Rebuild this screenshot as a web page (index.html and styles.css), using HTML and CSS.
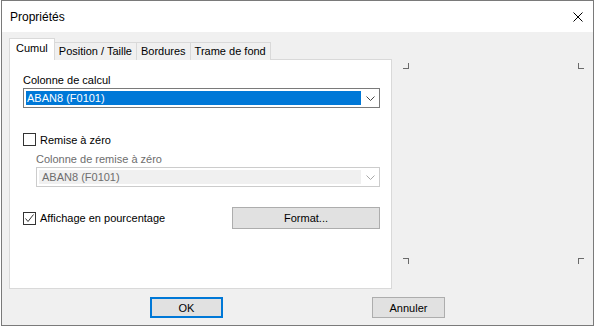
FILE: index.html
```html
<!DOCTYPE html>
<html lang="fr">
<head>
    <meta charset="UTF-8">
    <meta name="viewport" content="width=device-width, initial-scale=1.0">
    <title>Propriétés</title>
    <link rel="stylesheet" href="styles.css">
</head>
<body>

    <div class="dialog">
        <div class="titlebar">
            <span class="title">Propriétés</span>
            <svg class="close" width="10" height="10" viewBox="0 0 10 10">
                <path d="M0.5 0.5 L9.5 9.5 M9.5 0.5 L0.5 9.5" stroke="#000" stroke-width="1" fill="none"/>
            </svg>
        </div>

        <div class="client">
            <div class="content">
                <div class="tabcontrol">
                    <div class="tabs">
                        <div class="tab selected">Cumul</div>
                        <div class="tab">Position / Taille</div>
                        <div class="tab">Bordures</div>
                        <div class="tab">Trame de fond</div>
                    </div>
                    <div class="panel">
                        <div class="label">Colonne de calcul</div>
                        <div class="combo">
                            <span class="combo-value selected-value">ABAN8 (F0101)</span>
                            <span class="combo-arrow">
                                <svg width="9" height="5" viewBox="0 0 9 5"><path d="M0.5 0.5 L4.5 4.5 L8.5 0.5" stroke="#444" fill="none"/></svg>
                            </span>
                        </div>

                        <label class="check-row reset-row">
                            <span class="checkbox"></span>
                            <span>Remise à zéro</span>
                        </label>
                        <div class="indent">
                            <div class="label disabled-text">Colonne de remise à zéro</div>
                            <div class="combo disabled">
                                <span class="combo-value">ABAN8 (F0101)</span>
                                <span class="combo-arrow">
                                    <svg width="9" height="5" viewBox="0 0 9 5"><path d="M0.5 0.5 L4.5 4.5 L8.5 0.5" stroke="#a8a8a8" fill="none"/></svg>
                                </span>
                            </div>
                        </div>

                        <div class="percent-row">
                            <label class="check-row">
                                <span class="checkbox">
                                    <svg width="11" height="11" viewBox="0 0 11 11"><path d="M1.5 5.5 L4 8.5 L9.5 1.5" stroke="#333" fill="none"/></svg>
                                </span>
                                <span>Affichage en pourcentage</span>
                            </label>
                            <button class="btn format-btn">Format...</button>
                        </div>
                    </div>
                </div>

                <div class="preview">
                    <div class="marks">
                        <span class="mark tl"></span>
                        <span class="mark tr"></span>
                    </div>
                    <div class="marks">
                        <span class="mark bl"></span>
                        <span class="mark br"></span>
                    </div>
                </div>
            </div>

            <div class="buttons">
                <button class="btn default">OK</button>
                <button class="btn">Annuler</button>
            </div>
        </div>
    </div>

</body>
</html>
```

FILE: styles.css
```css
body {
    margin: 0;
    padding: 0;
    background-color: #ffffff;
    font-family: "Liberation Sans", Arial, sans-serif;
    font-size: 11px;
    color: #000;
}

.dialog {
    width: 593px;
    height: 326px;
    margin: 0 1px;
    box-sizing: border-box;
    border: 1px solid #7a7a7a;
    display: flex;
    flex-direction: column;
}

.titlebar {
    flex-shrink: 0;
    height: 31px;
    background-color: #ffffff;
    display: flex;
    align-items: center;
    justify-content: space-between;
    padding: 0 10px 0 8px;
}

.title {
    font-size: 12px;
}

.client {
    flex: 1;
    background-color: #f0f0f0;
    padding: 6px 0 0 7px;
}

.content {
    display: flex;
}

.tabcontrol {
    width: 383px;
}

.tabs {
    display: flex;
    align-items: flex-end;
    margin-bottom: -1px;
}

.tab {
    height: 17px;
    line-height: 17px;
    padding: 0 4px;
    border: 1px solid #d9d9d9;
    border-bottom: none;
    margin-left: -1px;
    background-color: #f0f0f0;
}

.tab.selected {
    height: 21px;
    line-height: 19px;
    margin-left: 0;
    padding: 0 6px;
    background-color: #ffffff;
    position: relative;
    z-index: 1;
}

.panel {
    height: 230px;
    box-sizing: border-box;
    background-color: #ffffff;
    border: 1px solid #d9d9d9;
    padding: 14px 11px 0 13px;
}

.label {
    line-height: 13px;
    height: 13px;
    margin-bottom: 1px;
}

.combo {
    height: 20px;
    box-sizing: border-box;
    border: 1px solid #7a7a7a;
    background-color: #ffffff;
    display: flex;
    align-items: stretch;
    padding: 2px 0 2px 2px;
}

.combo-value {
    flex: 1;
    line-height: 14px;
    padding-left: 1px;
}

.selected-value {
    background-color: #0078d7;
    color: #ffffff;
}

.combo-arrow {
    width: 18px;
    display: flex;
    align-items: center;
    justify-content: center;
}

.combo.disabled {
    border-color: #cccccc;
}

.combo.disabled .combo-value {
    background-color: #f0f0f0;
    color: #6d6d6d;
    padding-left: 3px;
}

.disabled-text {
    color: #6d6d6d;
}

.check-row {
    display: flex;
    align-items: center;
    gap: 4px;
    height: 13px;
}

.checkbox {
    width: 13px;
    height: 13px;
    box-sizing: border-box;
    border: 1px solid #333333;
    background-color: #ffffff;
    display: flex;
    align-items: center;
    justify-content: center;
}

.reset-row {
    margin-top: 25px;
}

.indent {
    margin-left: 13px;
    margin-top: 7px;
}

.percent-row {
    margin-top: 20px;
    display: flex;
    align-items: center;
    justify-content: space-between;
    height: 22px;
}

.btn {
    font-family: "Liberation Sans", Arial, sans-serif;
    font-size: 11px;
    color: #000;
    background-color: #e1e1e1;
    border: 1px solid #adadad;
    padding: 0;
    box-sizing: border-box;
}

.format-btn {
    width: 148px;
    height: 22px;
}

.preview {
    flex: 1;
    display: flex;
    flex-direction: column;
    justify-content: space-between;
    padding: 25px 9px 25px 11px;
}

.marks {
    display: flex;
    justify-content: space-between;
}

.mark {
    width: 5px;
    height: 5px;
    border: 0 solid #6a6a6a;
}

.mark.tl { border-right-width: 1px; border-bottom-width: 1px; }
.mark.tr { border-left-width: 1px; border-bottom-width: 1px; }
.mark.bl { border-right-width: 1px; border-top-width: 1px; }
.mark.br { border-left-width: 1px; border-top-width: 1px; }

.buttons {
    display: flex;
    gap: 149px;
    padding-left: 141px;
    margin-top: 8px;
}

.buttons .btn {
    width: 73px;
    height: 21px;
}

.btn.default {
    border: 2px solid #0078d7;
}
```
